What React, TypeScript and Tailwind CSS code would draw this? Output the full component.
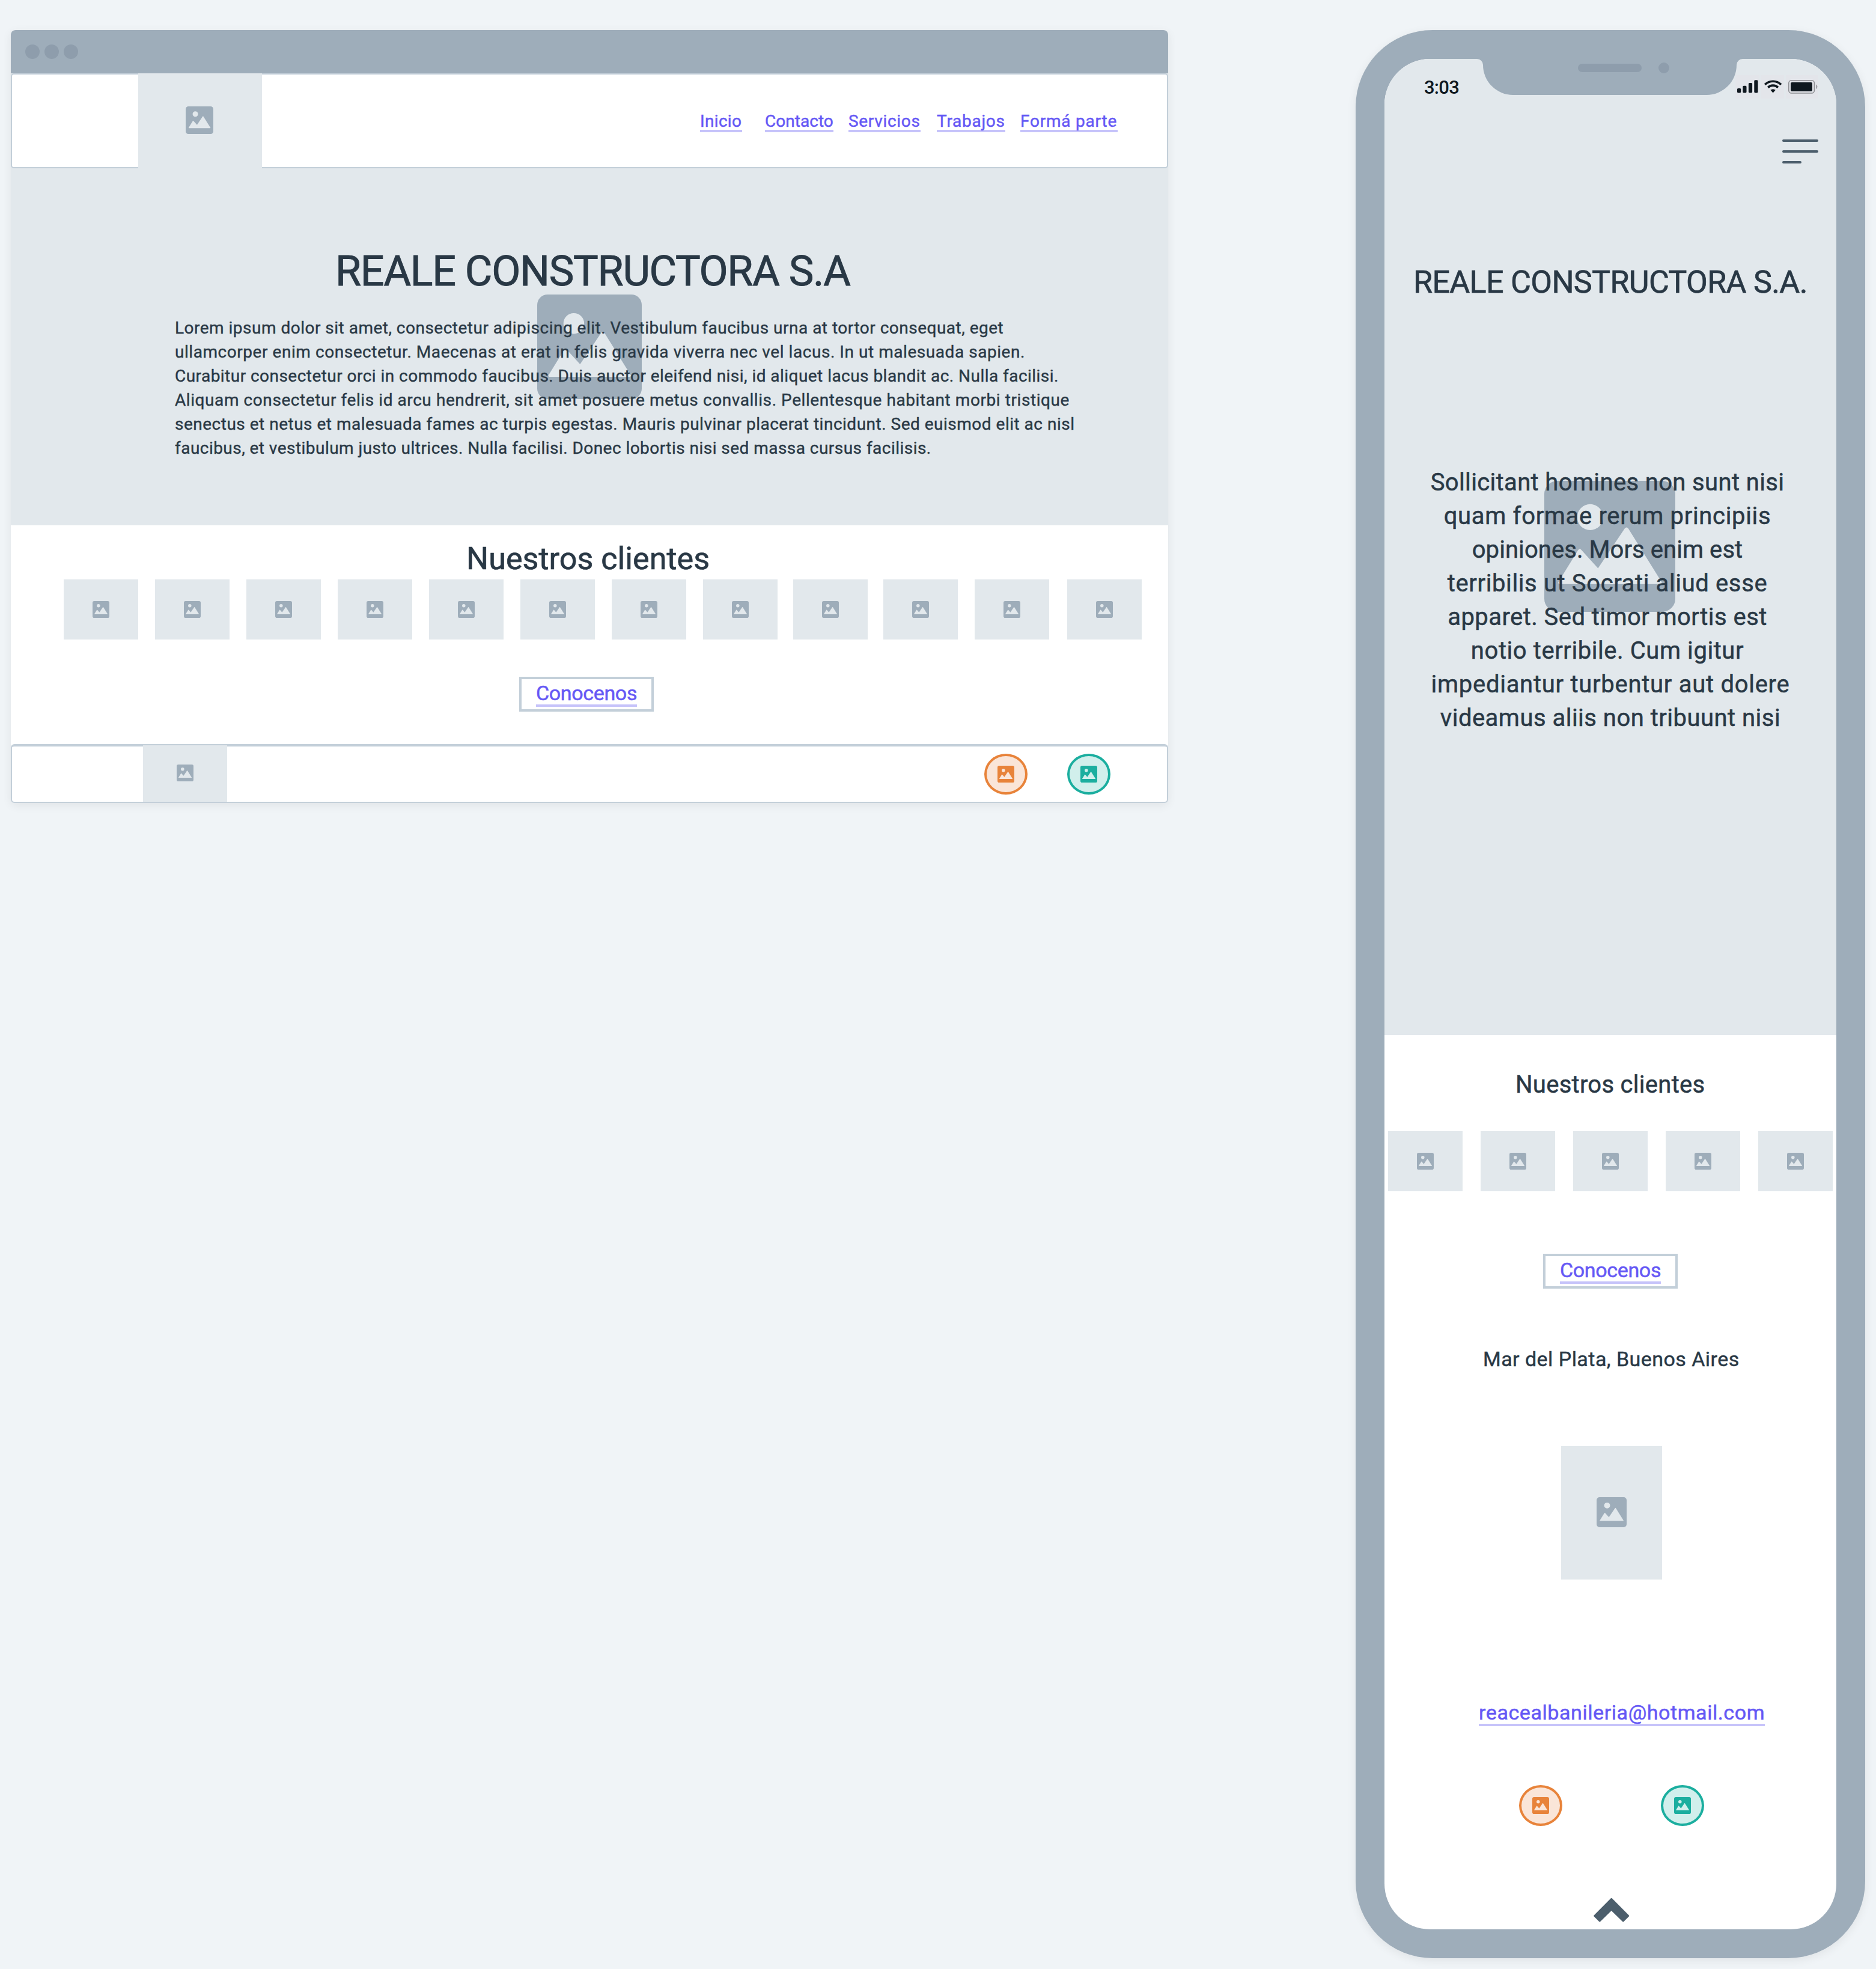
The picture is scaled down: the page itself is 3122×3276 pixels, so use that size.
import React from 'react';
import clsx from 'clsx';

/* Picture placeholder glyph; the sun and mountains are cut out of the tile. */
function PictureIcon({ className }: { className?: string }) {
  return (
    <svg viewBox="0 0 100 100" fill="currentColor" fillRule="evenodd" className={clsx('block shrink-0', className)} aria-hidden="true">
      <path d="M10 0H90A10 10 0 0 1 100 10V90A10 10 0 0 1 90 100H10A10 10 0 0 1 0 90V10A10 10 0 0 1 10 0ZM35 17.8A9.9 9.9 0 1 0 35 37.6A9.9 9.9 0 1 0 35 17.8ZM12 78.8C10.8 78.8 10.3 77.8 11 76.8L25.8 52.9Q27 51.2 28.3 52.7L41 66.7L61.4 36.4Q62.8 34.6 64.1 36.4L89.3 76.8C90 77.8 89.4 78.8 88.2 78.8Z" />
    </svg>
  );
}

function Placeholder({ className, icon = 'size-7' }: { className?: string; icon?: string }) {
  return (
    <div className={clsx('flex shrink-0 items-center justify-center bg-[#e2e8ec] text-[#9eadba]', className)}>
      <PictureIcon className={icon} />
    </div>
  );
}

function RoundBadge({ className }: { className?: string }) {
  return (
    <div className={clsx('flex h-[68px] w-[72px] shrink-0 items-center justify-center rounded-[50%] border-4', className)}>
      <PictureIcon className="size-7" />
    </div>
  );
}

const orange = 'border-[#e8833a] bg-[#fae5d8] text-[#e8833a]';
const teal = 'border-[#1bae9f] bg-[#d1efec] text-[#1bae9f]';

function ConocenosButton({ className }: { className?: string }) {
  return (
    <div className={clsx('flex h-[58px] w-[224px] justify-center border-4 border-[#c3cfd9] pt-[3px]', className)}>
      <a className="block h-[43px] w-[168px] whitespace-nowrap border-b-4 border-[#c6c3fa] text-[34px] leading-[40px] tracking-[-0.35px] text-[#6558f5] [-webkit-text-stroke:0.5px]">
        Conocenos
      </a>
    </div>
  );
}

const navLinks = [
  { label: 'Inicio', cls: 'w-[70px] tracking-[0.33px]' },
  { label: 'Contacto', cls: 'ml-[38px] w-[114px] tracking-[0.04px]' },
  { label: 'Servicios', cls: 'ml-[25px] w-[120px] tracking-[0.69px]' },
  { label: 'Trabajos', cls: 'ml-[27px] w-[114px] tracking-[0.72px]' },
  { label: 'Formá parte', cls: 'ml-[25px] w-[162px] tracking-[0.78px]' },
];

const introLines = [
  { text: 'Lorem ipsum dolor sit amet, consectetur adipiscing elit. Vestibulum faucibus urna at tortor consequat, eget', cls: 'tracking-[0.49px]' },
  { text: 'ullamcorper enim consectetur. Maecenas at erat in felis gravida viverra nec vel lacus. In ut malesuada sapien.', cls: 'tracking-[0.55px]' },
  { text: 'Curabitur consectetur orci in commodo faucibus. Duis auctor eleifend nisi, id aliquet lacus blandit ac. Nulla facilisi.', cls: 'tracking-[0.46px]' },
  { text: 'Aliquam consectetur felis id arcu hendrerit, sit amet posuere metus convallis. Pellentesque habitant morbi tristique', cls: 'tracking-[0.575px]' },
  { text: 'senectus et netus et malesuada fames ac turpis egestas. Mauris pulvinar placerat tincidunt. Sed euismod elit ac nisl', cls: 'tracking-[0.5px]' },
  { text: 'faucibus, et vestibulum justo ultrices. Nulla facilisi. Donec lobortis nisi sed massa cursus facilisis.', cls: 'tracking-[0.46px]' },
];

const clientMargins = [
  'ml-[88px]', 'ml-7', 'ml-7', 'ml-7', 'ml-7', 'ml-7', 'ml-7', 'ml-7', 'ml-[26px]', 'ml-[26px]', 'ml-7', 'ml-[30px]',
];

const phoneLines = [
  { text: 'Sollicitant homines non sunt nisi', cls: 'pr-[10px] tracking-[0.36px]' },
  { text: 'quam formae rerum principiis', cls: 'pr-[10px] tracking-[0.67px]' },
  { text: 'opiniones. Mors enim est', cls: 'pr-[10px] tracking-[0.07px]' },
  { text: 'terribilis ut Socrati aliud esse', cls: 'pr-[10px] tracking-[0.62px]' },
  { text: 'apparet. Sed timor mortis est', cls: 'pr-[10px] tracking-[0.44px]' },
  { text: 'notio terribile. Cum igitur', cls: 'pr-[10px] tracking-[0.57px]' },
  { text: 'impediantur turbentur aut dolere', cls: 'tracking-[0.72px]' },
  { text: 'videamus aliis non tribuunt nisi', cls: 'tracking-[0.48px]' },
];

function BrowserWindow() {
  return (
    <section className="ml-[18px] flex h-[1286px] w-[1926px] shrink-0 flex-col rounded-lg bg-white shadow-[0_4px_16px_rgba(0,0,0,0.07)]">
      <div className="flex h-[72px] gap-2 rounded-t-lg bg-[#9eadba] pt-6 pl-6">
        <span className="size-6 rounded-full bg-[#8e9dac]" />
        <span className="size-6 rounded-full bg-[#8e9dac]" />
        <span className="size-6 rounded-full bg-[#8e9dac]" />
      </div>

      <div className="bg-[#e2e8ec]">
        <header className="flex h-[158px] rounded-[5px] border-2 border-[#c3cfd9] bg-white">
          <Placeholder className="-my-[2px] ml-[210px] h-[158px] w-[206px]" icon="size-[46px] -translate-x-[1px] -translate-y-[1px]" />
          <nav className="ml-[729px] flex pt-[62px]">
            {navLinks.map((l) => (
              <a key={l.label} className={clsx('block h-[34px] shrink-0 whitespace-nowrap border-b-4 border-[#c6c3fa] text-[28px] leading-[32px] text-[#6558f5] [-webkit-text-stroke:0.45px]', l.cls)}>
                {l.label}
              </a>
            ))}
          </nav>
        </header>

        <div className="grid h-[594px]">
          <div className="col-start-1 row-start-1 flex items-center justify-center text-[#9eadba]">
            <PictureIcon className="size-[174px]" />
          </div>
          <div className="relative col-start-1 row-start-1 pt-[131px]">
            <h1 className="pl-[540px] text-[70px] leading-[80px] tracking-[-1.26px] [-webkit-text-stroke:0.9px]">REALE CONSTRUCTORA S.A</h1>
            <div className="mt-[35px] pl-[273px] text-[28px] leading-[40px] [-webkit-text-stroke:0.4px]">
              {introLines.map((l) => (
                <p key={l.text} className={clsx('whitespace-nowrap', l.cls)}>{l.text}</p>
              ))}
            </div>
          </div>
        </div>
      </div>

      <div className="h-[364px] pt-[26px]">
        <h2 className="pl-[758px] text-[52px] leading-[60px] tracking-[0.07px] [-webkit-text-stroke:0.7px]">Nuestros clientes</h2>
        <div className="mt-[4px] flex">
          {clientMargins.map((m, i) => (
            <Placeholder key={i} className={clsx('h-[100px] w-[124px]', m)} />
          ))}
        </div>
        <ConocenosButton className="mt-[62px] ml-[846px]" />
      </div>

      <footer className="flex h-[98px] rounded-[6px] border-2 border-t-4 border-[#c3cfd9] bg-white">
        <Placeholder className="-mt-[2px] ml-[218px] h-[94px] w-[140px]" icon="size-7 -translate-y-[1px]" />
        <RoundBadge className={clsx('mt-3 ml-[1260px]', orange)} />
        <RoundBadge className={clsx('mt-3 ml-[66px]', teal)} />
      </footer>
    </section>
  );
}

function StatusIcons() {
  return (
    <svg width="137" height="39" viewBox="0 0 137 39" className="block" aria-hidden="true">
      <path d="M0 0H40V39H0ZM42 0H81V39H42ZM84 0H137V39H84Z" fill="#e3e5ea" />
      <g fill="#0f181f">
        <rect x="3" y="22" width="6.2" height="7.4" rx="1.6" />
        <rect x="12.3" y="17.8" width="6.2" height="11.6" rx="1.6" />
        <rect x="21.9" y="13" width="6.2" height="16.4" rx="1.6" />
        <rect x="31.3" y="8.3" width="6.2" height="21.1" rx="1.6" />
        <path d="M58.4 24.8a7 7 0 0 1 8.4 0L62.6 29.5Z" />
      </g>
      <g fill="none" stroke="#0f181f" strokeWidth="3.6">
        <path d="M49.1 15.8a19.3 19.3 0 0 1 27 0" />
        <path d="M54.2 20.6a12 12 0 0 1 16.8 0" />
      </g>
      <rect x="88.8" y="8.8" width="42.6" height="21.2" rx="4.4" fill="none" stroke="#8f9094" strokeWidth="1.6" />
      <rect x="92" y="12" width="36" height="15" rx="2" fill="#0f181f" />
      <path d="M134 15.5a4 4 0 0 1 0 7.4Z" fill="#a0a1a6" />
    </svg>
  );
}

function Phone() {
  return (
    <section className="ml-[312px] flex h-[3208px] w-[848px] shrink-0 rounded-[128px] bg-[#9eadba] p-12 shadow-[0_4px_16px_rgba(0,0,0,0.07)]">
      <div className="relative flex w-[752px] flex-col overflow-hidden rounded-[76px] bg-white">
        <div className="absolute top-0 left-[154px] z-10 h-[60px] w-[442px]">
          <svg width="442" height="60" viewBox="0 0 442 60" className="block" aria-hidden="true">
            <path d="M0 0A10 10 0 0 1 10 10A50 50 0 0 0 60 60H382A50 50 0 0 0 432 10A10 10 0 0 1 442 0Z" fill="#9eadba" />
            <rect x="168" y="8" width="106" height="14" rx="7" fill="#8e9dac" />
            <circle cx="311" cy="15" r="9" fill="#8e9dac" />
          </svg>
        </div>

        <div className="grid h-[1624px] shrink-0 bg-[#e2e8ec]">
          <div className="col-start-1 row-start-1 flex items-center justify-center pr-[2px] pb-[3px] text-[#9eadba]">
            <PictureIcon className="size-[218px]" />
          </div>
          <div className="relative col-start-1 row-start-1">
            <div className="flex h-[134px] justify-between pr-[31px] pl-[66px]">
              <span className="pt-[32px] text-[31px] leading-8 font-medium tracking-[-0.75px] text-[#0f181f]">3:03</span>
              <span className="pt-[27px]"><StatusIcons /></span>
            </div>
            <div className="ml-[662px] flex w-[60px] flex-col gap-[14px]">
              <span className="h-1 rounded-full bg-[#4c5e6c]" />
              <span className="h-1 rounded-full bg-[#4c5e6c]" />
              <span className="h-1 w-8 rounded-full bg-[#4c5e6c]" />
            </div>
            <h1 className="mt-[168px] pl-12 text-[52px] leading-[60px] whitespace-nowrap tracking-[-0.65px] [-webkit-text-stroke:0.7px]">REALE CONSTRUCTORA S.A.</h1>
            <div className="mt-[275px] text-center text-[40px] leading-[56px] [-webkit-text-stroke:0.5px]">
              {phoneLines.map((l) => (
                <p key={l.text} className={clsx('whitespace-nowrap', l.cls)}>{l.text}</p>
              ))}
            </div>
          </div>
        </div>

        <h2 className="mt-[59px] pl-[218px] text-[40px] leading-[48px] tracking-[0.28px] [-webkit-text-stroke:0.5px]">Nuestros clientes</h2>
        <div className="mt-[53px] flex gap-[30px] pl-[6px]">
          {[0, 1, 2, 3, 4].map((i) => (
            <Placeholder key={i} className="h-[100px] w-[124px]" />
          ))}
        </div>
        <ConocenosButton className="mt-[104px] ml-[264px]" />
        <p className="mt-[97px] pl-[164px] text-[34px] leading-[40px] tracking-[0.46px] [-webkit-text-stroke:0.45px]">Mar del Plata, Buenos Aires</p>
        <Placeholder className="mt-[125px] ml-[294px] h-[222px] w-[168px]" icon="size-[50px] -translate-y-[1px]" />
        <a className="mt-[201px] ml-[157px] block h-[43px] w-[476px] shrink-0 whitespace-nowrap border-b-4 border-[#c6c3fa] text-[34px] leading-[40px] tracking-[0.57px] text-[#6558f5] [-webkit-text-stroke:0.5px]">
          reacealbanileria@hotmail.com
        </a>
        <div className="mt-[98px] flex gap-[164px] pl-[224px]">
          <RoundBadge className={orange} />
          <RoundBadge className={teal} />
        </div>
        <svg width="62" height="42" viewBox="0 0 62 42" className="mt-[119px] ml-[347px] block shrink-0" aria-hidden="true">
          <path d="M30.7 2.2L59 30.7L50.2 39.5L30.7 20.5L11.2 39.5L2.4 30.7Z" fill="#4c5e6c" stroke="#4c5e6c" strokeWidth="2.4" strokeLinejoin="round" />
        </svg>
      </div>
    </section>
  );
}

export default function App() {
  return (
    <main className="flex h-[3276px] w-[3122px] items-start overflow-hidden bg-[#f0f4f7] pt-[50px] font-['Roboto',sans-serif] text-[#293845]">
      <BrowserWindow />
      <Phone />
    </main>
  );
}
